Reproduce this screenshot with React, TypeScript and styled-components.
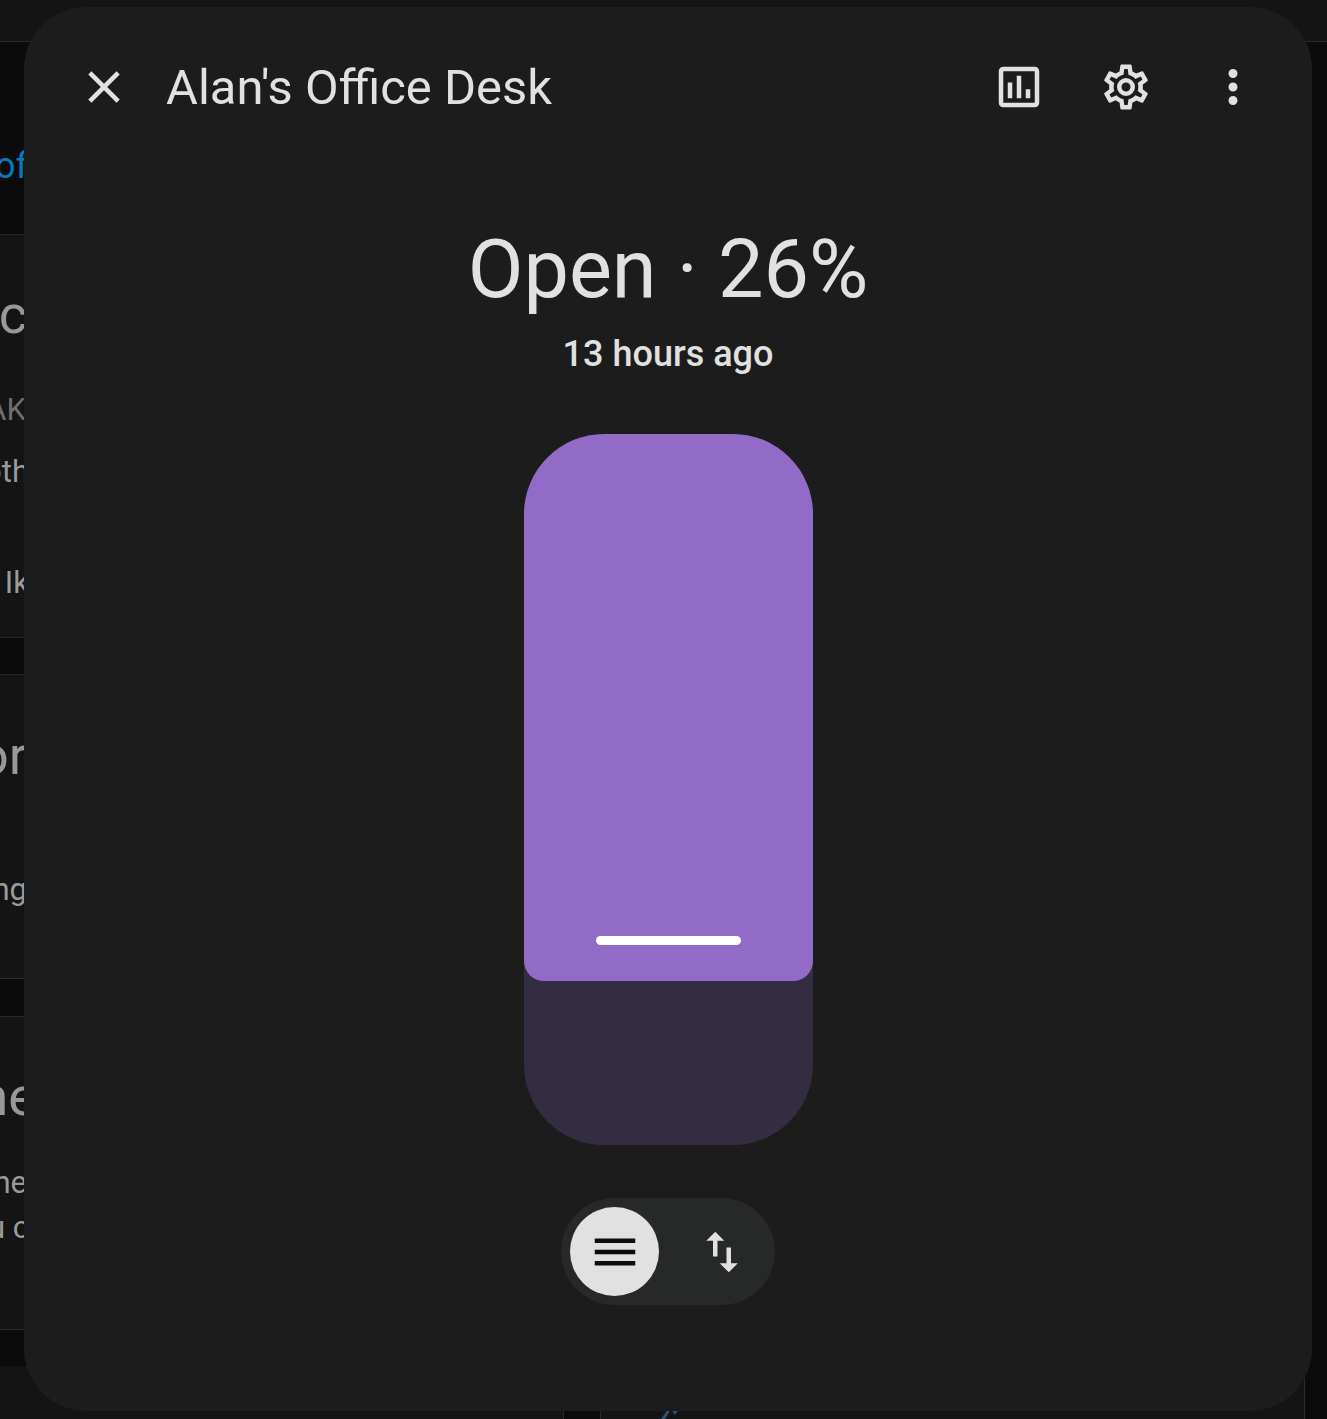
import styled, { createGlobalStyle } from "styled-components";

const ICONS = {
  close: "M19,6.41L17.59,5L12,10.59L6.41,5L5,6.41L10.59,12L5,17.59L6.41,19L12,13.41L17.59,19L19,17.59L13.41,12L19,6.41Z",
  chart:
    "M9 17H7V10H9V17M13 17H11V7H13V17M17 17H15V13H17V17M19 19H5V5H19V19.1M19 3H5C3.9 3 3 3.9 3 5V19C3 20.1 3.9 21 5 21H19C20.1 21 21 20.1 21 19V5C21 3.9 20.1 3 19 3Z",
  cog: "M12,8A4,4 0 0,1 16,12A4,4 0 0,1 12,16A4,4 0 0,1 8,12A4,4 0 0,1 12,8M12,10A2,2 0 0,0 10,12A2,2 0 0,0 12,14A2,2 0 0,0 14,12A2,2 0 0,0 12,10M10,22C9.75,22 9.54,21.82 9.5,21.58L9.13,18.93C8.5,18.68 7.96,18.34 7.44,17.94L4.95,18.95C4.73,19.03 4.46,18.95 4.34,18.73L2.34,15.27C2.21,15.05 2.27,14.78 2.46,14.63L4.57,12.97L4.5,12L4.57,11L2.46,9.37C2.27,9.22 2.21,8.95 2.34,8.73L4.34,5.27C4.46,5.05 4.73,4.96 4.95,5.05L7.44,6.05C7.96,5.66 8.5,5.32 9.13,5.07L9.5,2.42C9.54,2.18 9.75,2 10,2H14C14.25,2 14.46,2.18 14.5,2.42L14.87,5.07C15.5,5.32 16.04,5.66 16.56,6.05L19.05,5.05C19.27,4.96 19.54,5.05 19.66,5.27L21.66,8.73C21.79,8.95 21.73,9.22 21.54,9.37L19.43,11L19.5,12L19.43,13L21.54,14.63C21.73,14.78 21.79,15.05 21.66,15.27L19.66,18.73C19.54,18.95 19.27,19.04 19.05,18.95L16.56,17.95C16.04,18.34 15.5,18.68 14.87,18.93L14.5,21.58C14.46,21.82 14.25,22 14,22H10M11.25,4L10.88,6.61C9.68,6.86 8.62,7.5 7.85,8.39L5.44,7.35L4.69,8.65L6.8,10.2C6.4,11.37 6.4,12.64 6.8,13.8L4.68,15.36L5.43,16.66L7.86,15.62C8.63,16.5 9.68,17.14 10.87,17.38L11.24,20H12.76L13.13,17.39C14.32,17.14 15.37,16.5 16.14,15.62L18.57,16.66L19.32,15.36L17.2,13.81C17.6,12.64 17.6,11.37 17.2,10.2L19.31,8.65L18.56,7.35L16.15,8.39C15.38,7.5 14.32,6.86 13.12,6.62L12.75,4H11.25Z",
  dots: "M12,16A2,2 0 0,1 14,18A2,2 0 0,1 12,20A2,2 0 0,1 10,18A2,2 0 0,1 12,16M12,10A2,2 0 0,1 14,12A2,2 0 0,1 12,14A2,2 0 0,1 10,12A2,2 0 0,1 12,10M12,4A2,2 0 0,1 14,6A2,2 0 0,1 12,8A2,2 0 0,1 10,6A2,2 0 0,1 12,4Z",
  menu: "M3,6H21V8H3V6M3,11H21V13H3V11M3,16H21V18H3V16Z",
  swap: "M9,3L5,7H8V14H10V7H13M16,17V10H14V17H11L15,21L19,17H16Z",
};

const GlobalStyle = createGlobalStyle`
  html, body {
    margin: 0;
    padding: 0;
    background: #0b0b0b;
  }
  * {
    box-sizing: border-box;
  }
`;

const Page = styled.div`
  position: relative;
  width: 1327px;
  height: 1419px;
  overflow: hidden;
  background: #0b0b0b;
  font-family: Roboto, "Liberation Sans", sans-serif;
  color: #e1e1e1;
`;

const TopBar = styled.div`
  height: 42px;
  background: #141414;
  border-bottom: 1px solid #2a2a2a;
`;

const Behind = styled.div`
  width: 24px;
  height: 1324px;
  overflow: hidden;
  display: flex;
  flex-direction: column;
`;

const Band = styled.div<{ $height: number; $dark?: boolean }>`
  height: ${(p) => p.$height}px;
  flex-shrink: 0;
  overflow: hidden;
  background: ${(p) => (p.$dark ? "#0b0b0b" : "#141414")};
  border-bottom: 1px solid #2a2a2a;
`;

const Fragment = styled.div<{ $top: number; $size: number; $color: string; $cut?: number }>`
  display: flex;
  justify-content: flex-end;
  white-space: nowrap;
  margin-top: ${(p) => p.$top}px;
  margin-right: ${(p) => -(p.$cut ?? 0)}px;
  font-size: ${(p) => p.$size}px;
  line-height: ${(p) => p.$size}px;
  color: ${(p) => p.$color};
`;

const BottomStrip = styled.div`
  display: flex;
  height: 53px;
  background: #141414;
`;

const StripLead = styled.div`
  width: 563px;
`;

const StripCell = styled.div`
  width: 38px;
  background: #0b0b0b;
  border-left: 1px solid #2a2a2a;
  border-right: 1px solid #2a2a2a;
`;

const StripChart = styled.div`
  flex: 1;
  position: relative;
`;

const BlueMark = styled.svg`
  position: absolute;
  left: 60px;
  bottom: 0;
`;

const StripEnd = styled.div`
  width: 23px;
  background: #0b0b0b;
  border-left: 1px solid #2a2a2a;
`;

const Dialog = styled.div`
  position: absolute;
  left: 24px;
  top: 7px;
  width: 1288px;
  height: 1404px;
  border-radius: 62px;
  background: #1c1c1c;
  display: flex;
  flex-direction: column;
  align-items: center;
`;

const Header = styled.header`
  width: 100%;
  height: 160px;
  flex-shrink: 0;
  padding: 0 26px;
  display: flex;
  align-items: center;
`;

const IconButton = styled.button`
  width: 107px;
  height: 107px;
  padding: 0;
  border: 0;
  background: none;
  color: #e1e1e1;
  display: flex;
  align-items: center;
  justify-content: center;
`;

const Title = styled.h2`
  flex: 1;
  margin: 2px 0 0 9px;
  font-size: 48.9px;
  font-weight: 400;
  line-height: 60px;
  white-space: nowrap;
`;

const StateText = styled.div`
  margin-top: 55px;
  font-size: 81px;
  line-height: 96px;
  font-weight: 400;
  text-align: center;
`;

const Changed = styled.div`
  margin-top: 14px;
  font-size: 36px;
  line-height: 44px;
  font-weight: 500;
  text-align: center;
`;

const Track = styled.div`
  position: relative;
  width: 289px;
  height: 711px;
  margin-top: 58px;
  flex-shrink: 0;
  border-radius: 80px;
  background: #342c40;
  overflow: hidden;
`;

const Fill = styled.div`
  position: absolute;
  left: 0;
  right: 0;
  top: 0;
  border-radius: 0 0 20px 20px;
  background: #916bc5;
`;

const Handle = styled.div`
  position: absolute;
  left: 72px;
  right: 72px;
  bottom: 36px;
  height: 9px;
  border-radius: 5px;
  background: #ffffff;
`;

const ModeToggle = styled.div`
  margin-top: 53px;
  width: 214px;
  height: 107px;
  padding: 9px;
  border-radius: 54px;
  background: #272929;
  display: flex;
  align-items: center;
  gap: 18px;
`;

const ModeButton = styled.button<{ $active?: boolean }>`
  width: 89px;
  height: 89px;
  padding: 0;
  border: 0;
  border-radius: 50%;
  background: ${(p) => (p.$active ? "#e1e1e1" : "transparent")};
  color: ${(p) => (p.$active ? "#0b0b0b" : "#e1e1e1")};
  display: flex;
  align-items: center;
  justify-content: center;
`;

function Icon({ path }: { path: string }) {
  return (
    <svg width="54" height="54" viewBox="0 0 24 24" fill="currentColor">
      <path d={path} />
    </svg>
  );
}

const FILL_HEIGHT = 547;

function App() {
  return (
    <Page>
      <GlobalStyle />
      <TopBar />
      <Behind>
        <Band $height={193} $dark>
          <Fragment $top={106} $size={36} $color="#0a78bd" $cut={4}>
            Prof
          </Fragment>
        </Band>
        <Band $height={403}>
          <Fragment $top={53} $size={54} $color="#989898" $cut={3}>
            c
          </Fragment>
          <Fragment $top={52} $size={31} $color="#6e6e6e" $cut={2}>
            AK
          </Fragment>
          <Fragment $top={31} $size={31} $color="#9a9a9a" $cut={5}>
            oth
          </Fragment>
          <Fragment $top={80} $size={31} $color="#9a9a9a" $cut={5}>
            Ik
          </Fragment>
        </Band>
        <Band $height={37} $dark />
        <Band $height={304}>
          <Fragment $top={54} $size={54} $color="#989898" $cut={3}>
            or
          </Fragment>
          <Fragment $top={91} $size={31} $color="#9a9a9a" $cut={3}>
            ng
          </Fragment>
        </Band>
        <Band $height={38} $dark />
        <Band $height={313}>
          <Fragment $top={53} $size={54} $color="#989898" $cut={13}>
            ne
          </Fragment>
          <Fragment $top={43} $size={31} $color="#9a9a9a" $cut={3}>
            ne
          </Fragment>
          <Fragment $top={14} $size={31} $color="#9a9a9a" $cut={5}>
            u c
          </Fragment>
        </Band>
        <Band $height={37} $dark />
      </Behind>
      <BottomStrip>
        <StripLead />
        <StripCell />
        <StripChart>
          <BlueMark width="24" height="10" viewBox="0 0 24 10">
            <path d="M0 10L7 0H10L4 10ZM10 0H18L14 6Z" fill="#2c5378" />
          </BlueMark>
        </StripChart>
        <StripEnd />
      </BottomStrip>

      <Dialog>
        <Header>
          <IconButton>
            <Icon path={ICONS.close} />
          </IconButton>
          <Title>Alan's Office Desk</Title>
          <IconButton>
            <Icon path={ICONS.chart} />
          </IconButton>
          <IconButton>
            <Icon path={ICONS.cog} />
          </IconButton>
          <IconButton>
            <Icon path={ICONS.dots} />
          </IconButton>
        </Header>
        <StateText>Open · 26%</StateText>
        <Changed>13 hours ago</Changed>
        <Track>
          <Fill style={{ height: FILL_HEIGHT }}>
            <Handle />
          </Fill>
        </Track>
        <ModeToggle>
          <ModeButton $active>
            <Icon path={ICONS.menu} />
          </ModeButton>
          <ModeButton>
            <Icon path={ICONS.swap} />
          </ModeButton>
        </ModeToggle>
      </Dialog>
    </Page>
  );
}

export default App;
